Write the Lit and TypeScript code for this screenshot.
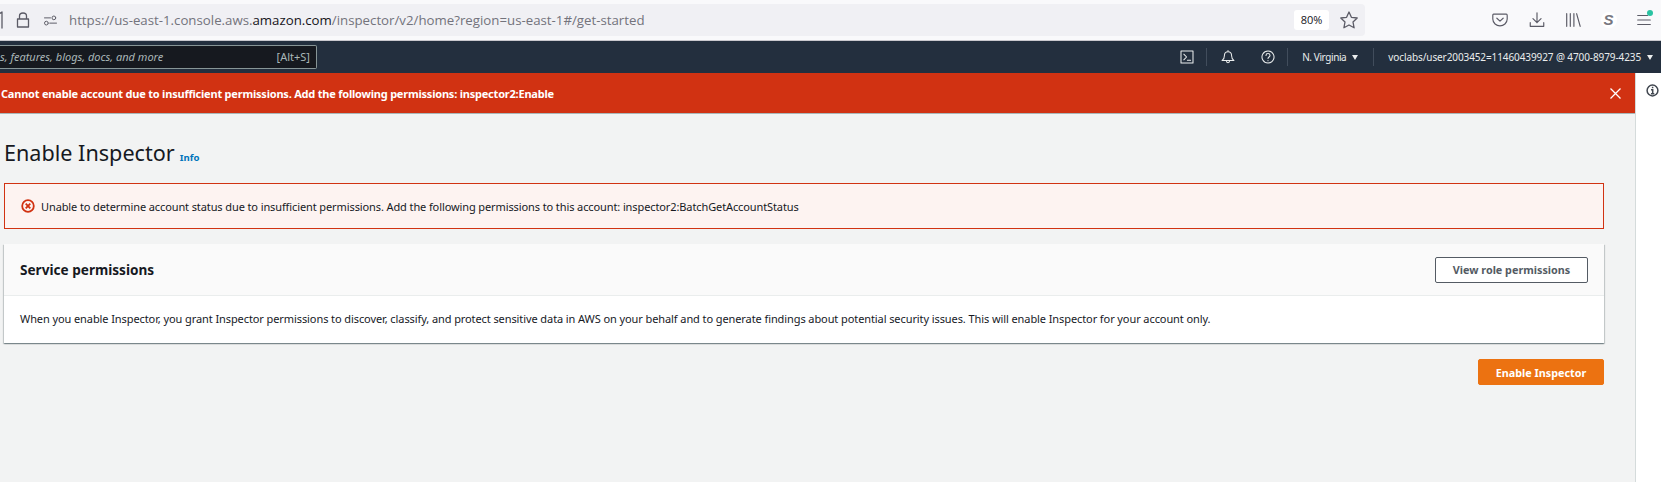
import { html, svg, css, LitElement } from 'lit';
import { customElement } from 'lit/decorators.js';

const icon = (d: string, size = 20) => html`<svg
  width=${size}
  height=${size}
  viewBox="0 0 20 20"
  fill="none"
  stroke="currentColor"
  stroke-width="1.3"
  stroke-linecap="round"
  stroke-linejoin="round"
>
  ${svg`<path d=${d}></path>`}
</svg>`;

@customElement('app-root')
export class AppRoot extends LitElement {
  render() {
    return html`
      <div class="browser">
        <div class="url">
          <span class="shield">${icon('M1 4 C4 4 6 3 7 2 M7 2 V18', 20)}</span>
          <span class="lock">${icon('M3.5 9 H14.5 V17 H3.5 Z M5.5 9 V6 C5.5 2 12.5 2 12.5 6 V9', 20)}</span>
          <span class="perm">${icon('M2 6.5 H10 M17 6.5 A2.5 2.5 0 1 1 12 6.5 A2.5 2.5 0 1 1 17 6.5 M7 13.5 A2.5 2.5 0 1 1 2 13.5 A2.5 2.5 0 1 1 7 13.5 M9 13.5 H18', 15)}</span>
          <span class="url-text">https://us-east-1.console.aws.<b>amazon.com</b>/inspector/v2/home?region=us-east-1#/get-started</span>
          <span class="zoom">80%</span>
          <span class="star">${icon('M10 2 L12.4 7.3 L18.2 8 L14 12 L15.1 17.8 L10 15 L4.9 17.8 L6 12 L1.8 8 L7.6 7.3 Z', 20)}</span>
        </div>
        <div class="tools">
          <span>${icon('M3 3.5 H17 C17.8 3.5 18 4 18 5 V9 C18 13.5 14 16.5 10 16.5 C6 16.5 2 13.5 2 9 V5 C2 4 2.2 3.5 3 3.5 Z M6.5 8 L10 11.2 L13.5 8', 18)}</span>
          <span>${icon('M10 2 V13 M5.5 8.5 L10 13 L14.5 8.5 M2.5 13 V17 H17.5 V13', 18)}</span>
          <span>${icon('M3 3 V17 M7 3 V17 M11 3 V17 M14 3 L18 17', 18)}</span>
          <span class="avatar">S</span>
          <span class="menu">${icon('M3 5 H14 M3 10 H17 M3 15 H17', 18)}<i></i></span>
        </div>
      </div>

      <nav class="nav">
        <div class="search">
          <span class="placeholder">s, features, blogs, docs, and more</span>
          <span class="shortcut">[Alt+S]</span>
        </div>
        <div class="nav-right">
          <span class="terminal">${icon('M2.5 2.5 H17.5 V17.5 H2.5 Z M6 6.5 L9.5 10 L6 13.5 M10.5 14 H14.5', 16)}</span>
          <span class="sep"></span>
          <span class="bell">${icon('M2.5 14.5 C5 13 5.5 11 5.5 8.5 C5.5 5.5 7.5 3.5 10 3.5 C12.5 3.5 14.5 5.5 14.5 8.5 C14.5 11 15 13 17.5 14.5 Z M8 14.5 C8 18 12 18 12 14.5 M10 3.5 V2', 16)}</span>
          <span class="help">${icon('M10 2.5 A7.5 7.5 0 1 0 10.01 2.5 Z M7.5 8 C7.5 5 12.5 5 12.5 8 C12.5 10 10 10 10 12 M10 14.5 V14.6', 16)}</span>
          <span class="sep"></span>
          <span class="region">N. Virginia<i class="caret"></i></span>
          <span class="sep"></span>
          <span class="account">voclabs/user2003452=11460439927 @ 4700-8979-4235<i class="caret"></i></span>
        </div>
      </nav>

      <div class="content">
        <main class="main">
          <div class="flash">
            <span>Cannot enable account due to insufficient permissions. Add the following permissions: inspector2:Enable</span>
            <svg width="13" height="13" viewBox="0 0 13 13" stroke="currentColor" stroke-width="1.3">
              <path d="M1.5 1.5 L11.5 11.5 M11.5 1.5 L1.5 11.5"></path>
            </svg>
          </div>
          <div class="page">
            <div class="title">
              <h1>Enable Inspector</h1>
              <a>Info</a>
            </div>
            <div class="alert">
              <svg width="14" height="14" viewBox="0 0 14 14" fill="none" stroke="#d13212" stroke-width="1.8">
                <circle cx="7" cy="7" r="5.8"></circle>
                <path d="M4.7 4.7 L9.3 9.3 M9.3 4.7 L4.7 9.3"></path>
              </svg>
              <span>Unable to determine account status due to insufficient permissions. Add the following permissions to this account: inspector2:BatchGetAccountStatus</span>
            </div>
            <section class="card">
              <header>
                <h2>Service permissions</h2>
                <button class="normal">View role permissions</button>
              </header>
              <p>When you enable Inspector, you grant Inspector permissions to discover, classify, and protect sensitive data in AWS on your behalf and to generate findings about potential security issues. This will enable Inspector for your account only.</p>
            </section>
            <div class="actions">
              <button class="primary">Enable Inspector</button>
            </div>
          </div>
        </main>
        <aside class="rail">
          <svg width="13" height="13" viewBox="0 0 13 13" fill="none" stroke="#414750" stroke-width="1.5">
            <circle cx="6.5" cy="6.5" r="5.4"></circle>
            <path d="M5 5.7 H6.7 V9.8 M5 9.8 H8.3 M6.6 2.8 V4.2"></path>
          </svg>
        </aside>
      </div>
    `;
  }

  static styles = css`
    :host {
      display: flex;
      flex-direction: column;
      width: 1661px;
      height: 482px;
      overflow: hidden;
      font-family: 'Noto Sans', sans-serif;
      font-size: 11px;
      color: #16191f;
    }

    svg {
      display: block;
    }

    .browser {
      flex: none;
      display: flex;
      align-items: center;
      height: 41px;
      box-sizing: border-box;
      background: #f9f9fb;
      border-bottom: 1px solid #c9c9ce;
      color: #5b5b66;
    }

    .url {
      flex: none;
      display: flex;
      align-items: center;
      width: 1365px;
      height: 32px;
      background: #f0f0f4;
      border-radius: 0 4px 4px 0;
    }

    .shield {
      margin-left: -5px;
    }

    .lock {
      margin-left: -1px;
    }

    .perm {
      margin-left: 9px;
    }

    .url-text {
      flex: 1;
      margin-left: 11px;
      font-family: 'Open Sans', sans-serif;
      font-size: 13.25px;
      color: #73737c;
      white-space: nowrap;
    }

    .url-text b {
      font-weight: 400;
      color: #15141a;
    }

    .zoom {
      width: 35px;
      height: 20px;
      line-height: 20px;
      text-align: center;
      background: #fff;
      border-radius: 3px;
      font-family: 'Open Sans', sans-serif;
      font-size: 11px;
      color: #15141a;
    }

    .star {
      margin: 0 6px 0 10px;
    }

    .tools {
      display: flex;
      align-items: center;
      gap: 18.5px;
      margin-left: 126px;
    }

    .avatar {
      width: 16px;
      height: 16px;
      border-radius: 50%;
      background: #fff;
      color: #77777f;
      text-align: center;
      font: italic 700 15px/16px 'Liberation Sans', sans-serif;
    }

    .menu {
      position: relative;
    }

    .menu i {
      position: absolute;
      top: -1px;
      right: 0;
      width: 6px;
      height: 6px;
      border-radius: 50%;
      background: #2ac3a2;
    }

    .nav {
      flex: none;
      display: flex;
      align-items: center;
      justify-content: space-between;
      height: 32px;
      background: #232f3e;
      color: #eaeded;
      font-size: 10px;
    }

    .search {
      display: flex;
      align-items: center;
      justify-content: space-between;
      width: 317px;
      height: 24px;
      padding: 0 6px 1px 0;
      box-sizing: border-box;
      background: #16191f;
      border: 1px solid #879596;
      border-left: none;
      border-radius: 0 2px 2px 0;
      color: #aab7b8;
      font-size: 11px;
    }

    .placeholder {
      font-style: italic;
    }

    .nav-right {
      display: flex;
      align-items: center;
    }

    .terminal {
      margin-right: 11px;
    }

    .bell {
      margin-left: 13px;
    }

    .help {
      margin: 0 11px 0 24px;
    }

    .sep {
      width: 1px;
      height: 18px;
      background: #414d5c;
    }

    .region {
      margin: 0 15px 0 14px;
      display: flex;
      align-items: center;
      gap: 6px;
      letter-spacing: -0.4px;
    }

    .account {
      margin: 0 8px 0 14px;
      display: flex;
      align-items: center;
      gap: 6px;
      letter-spacing: -0.1px;
    }

    .caret {
      width: 0;
      height: 0;
      border: 3.5px solid transparent;
      border-top: 5px solid #eaeded;
      border-bottom: none;
    }

    .content {
      flex: 1;
      display: flex;
      min-height: 0;
    }

    .main {
      width: 1636px;
      box-sizing: border-box;
      background: #f2f3f3;
      border-right: 1px solid #d5dbdb;
    }

    .rail {
      flex: 1;
      background: #fff;
      padding: 11px 0 0 10px;
    }

    .flash {
      display: flex;
      align-items: center;
      justify-content: space-between;
      height: 41px;
      padding: 0 13px 0 1px;
      box-sizing: border-box;
      background: #d13212;
      border-bottom: 1px solid #aab7b8;
      color: #fff;
      font-weight: 700;
      letter-spacing: -0.21px;
    }

    .page {
      padding: 0 31px 0 4px;
    }

    .title {
      display: flex;
      align-items: baseline;
      gap: 5px;
      height: 69px;
      padding-top: 22px;
      box-sizing: border-box;
    }

    h1 {
      margin: 0;
      font-size: 21.6px;
      line-height: 34px;
      font-weight: 400;
    }

    .title a {
      color: #0073bb;
      font-size: 9.6px;
      font-weight: 700;
    }

    .alert {
      display: flex;
      align-items: center;
      gap: 6px;
      height: 46px;
      padding-left: 16px;
      box-sizing: border-box;
      background: #fdf3f1;
      border: 1px solid #d13212;
      letter-spacing: -0.105px;
    }

    .card {
      margin-top: 15px;
      background: #fff;
      box-shadow: 0 1px 1px 0 rgba(0, 28, 36, 0.3), 1px 1px 1px 0 rgba(0, 28, 36, 0.15), -1px 1px 1px 0 rgba(0, 28, 36, 0.15);
    }

    .card header {
      display: flex;
      align-items: center;
      justify-content: space-between;
      height: 52px;
      padding: 0 16px;
      box-sizing: border-box;
      background: #fafafa;
      border-bottom: 1px solid #eaeded;
    }

    h2 {
      margin: 0;
      font-size: 13.6px;
      font-weight: 700;
    }

    .card p {
      margin: 0;
      height: 47px;
      padding: 0 16px;
      line-height: 46px;
      letter-spacing: -0.09px;
    }

    button {
      font: 700 10.8px 'Noto Sans', sans-serif;
      height: 26px;
      border-radius: 2px;
      padding: 0;
    }

    .normal {
      width: 153px;
      background: #fff;
      border: 1px solid #545b64;
      color: #545b64;
    }

    .actions {
      display: flex;
      justify-content: flex-end;
      margin-top: 16px;
    }

    .primary {
      width: 126px;
      background: #ec7211;
      border: 1px solid #ec7211;
      color: #fff;
    }
  `;
}
